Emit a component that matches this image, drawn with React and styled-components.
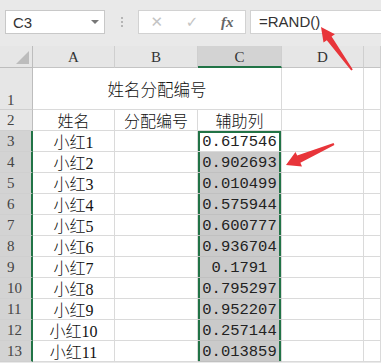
import React from 'react';
import styled, { createGlobalStyle, css } from 'styled-components';

const GREEN = '#217346';

const Global = createGlobalStyle`
  body {
    margin: 0;
    background: #e9e9e9;
    font-family: "Liberation Sans", "Noto Sans CJK SC", sans-serif;
  }
`;

const Page = styled.div`
  position: relative;
  width: 381px;
  height: 363px;
  overflow: hidden;
  background: #e9e9e9;
`;

const FormulaBar = styled.div`
  display: flex;
  align-items: center;
  height: 46px;
  padding: 0 0 2px 5px;
  box-sizing: border-box;
`;

const NameBox = styled.div`
  display: flex;
  align-items: center;
  justify-content: space-between;
  width: 100px;
  height: 24px;
  box-sizing: border-box;
  padding: 0 5px 0 7px;
  background: #fff;
  border: 1px solid #c8c8c8;
  font-size: 15px;
  color: #333;
`;

const Caret = styled.span`
  width: 0;
  height: 0;
  border-left: 4px solid transparent;
  border-right: 4px solid transparent;
  border-top: 4px solid #777;
`;

const Grip = styled.div`
  width: 2px;
  height: 13px;
  margin: 0 15px 0 16px;
  background-image: radial-gradient(circle, #b5b5b5 1px, transparent 1.2px);
  background-size: 2px 4px;
`;

const ButtonBox = styled.div`
  display: flex;
  align-items: center;
  justify-content: space-around;
  width: 108px;
  height: 24px;
  box-sizing: border-box;
  background: #fff;
  border: 1px solid #d2d2d2;
  margin-right: 4px;
`;

const ToolIcon = styled.span`
  font-size: 15px;
  color: ${p => (p.$dark ? '#666' : '#c4c4c4')};
  font-family: ${p => (p.$dark ? '"Liberation Serif", serif' : '"DejaVu Sans", sans-serif')};
  font-style: ${p => (p.$dark ? 'italic' : 'normal')};
  font-weight: ${p => (p.$dark ? 'bold' : 'normal')};
`;

const FormulaInput = styled.div`
  flex: 1;
  height: 24px;
  box-sizing: border-box;
  background: #fff;
  border: 1px solid #d2d2d2;
  border-right: none;
  padding-left: 8px;
  line-height: 22px;
  font-size: 15px;
  color: #333;
`;

const Sheet = styled.div`
  display: grid;
  grid-template-columns: 33px 82px 83px 84px 82px 1fr;
  grid-template-rows: 22px 42px repeat(12, 21px);
  background: #fff;
`;

const headBase = css`
  display: flex;
  align-items: center;
  justify-content: center;
  box-sizing: border-box;
  font-family: "Liberation Serif", serif;
  color: #333;
  background: #e6e6e6;
`;

const Corner = styled.div`
  ${headBase};
  position: relative;
  border-right: 1px solid #bdbdbd;
  border-bottom: 1px solid #bdbdbd;
  &::after {
    content: '';
    position: absolute;
    right: 3px;
    bottom: 3px;
    border-left: 13px solid transparent;
    border-bottom: 13px solid #bcbcbc;
  }
`;

const ColHead = styled.div`
  ${headBase};
  font-size: 15px;
  padding-top: 2px;
  border-right: 1px solid #cfcfcf;
  border-bottom: ${p => (p.$sel ? `2px solid ${GREEN}` : '1px solid #c4c4c4')};
  background: ${p => (p.$sel ? '#d3d3d3' : '#e6e6e6')};
`;

const RowHead = styled.div`
  ${headBase};
  font-size: 15px;
  color: #444;
  align-items: ${p => (p.$tall ? 'flex-end' : 'center')};
  justify-content: flex-start;
  padding-left: 7px;
  border-bottom: 1px solid #cfcfcf;
  border-right: ${p => (p.$sel ? `2px solid ${GREEN}` : '1px solid #bdbdbd')};
  background: ${p => (p.$sel ? '#d3d3d3' : '#e6e6e6')};
`;

const Cell = styled.div`
  display: flex;
  align-items: center;
  justify-content: center;
  box-sizing: border-box;
  border-right: 1px solid #dadada;
  border-bottom: 1px solid #dadada;
  font-family: "Liberation Serif", "Noto Sans CJK SC", serif;
  font-size: 16px;
  font-weight: 300;
  color: #111;
  white-space: nowrap;
  overflow: hidden;
`;

const TitleCell = styled(Cell)`
  grid-column: span 3;
  font-size: 16.5px;
`;

const NumCell = styled(Cell)`
  font-family: "Liberation Mono", monospace;
  font-size: 15.5px;
  font-weight: 400;
  color: #222;
  padding-top: 2px;
  background: ${p => (p.$active ? '#fff' : '#cacaca')};
  border-bottom-color: ${p => (p.$active ? '#dadada' : '#c0c0c0')};
  box-shadow: inset 2px 0 0 ${GREEN}, inset -2px 0 0 ${GREEN}
    ${p => (p.$first ? `, inset 0 2px 0 ${GREEN}` : '')};
`;

const Overlay = styled.svg`
  position: absolute;
  left: 0;
  top: 0;
  pointer-events: none;
`;

const names = Array.from({ length: 11 }, (_, i) => `小红${i + 1}`);
const values = [
  '0.617546', '0.902693', '0.010499', '0.575944', '0.600777', '0.936704',
  '0.1791', '0.795297', '0.952207', '0.257144', '0.013859',
];

export default function App() {
  return (
    <Page>
      <Global />
      <FormulaBar>
        <NameBox>
          C3
          <Caret />
        </NameBox>
        <Grip />
        <ButtonBox>
          <ToolIcon>✕</ToolIcon>
          <ToolIcon>✓</ToolIcon>
          <ToolIcon $dark>fx</ToolIcon>
        </ButtonBox>
        <FormulaInput>=RAND()</FormulaInput>
      </FormulaBar>

      <Sheet>
        <Corner />
        <ColHead>A</ColHead>
        <ColHead>B</ColHead>
        <ColHead $sel>C</ColHead>
        <ColHead>D</ColHead>
        <ColHead />

        <RowHead $tall>1</RowHead>
        <TitleCell>姓名分配编号</TitleCell>
        <Cell />
        <Cell />

        <RowHead>2</RowHead>
        <Cell>姓名</Cell>
        <Cell>分配编号</Cell>
        <Cell>辅助列</Cell>
        <Cell />
        <Cell />

        {names.map((n, i) => (
          <React.Fragment key={n}>
            <RowHead $sel>{i + 3}</RowHead>
            <Cell>{n}</Cell>
            <Cell />
            <NumCell $active={i === 0} $first={i === 0}>{values[i]}</NumCell>
            <Cell />
            <Cell />
          </React.Fragment>
        ))}
      </Sheet>

      <Overlay width="381" height="363">
        <polygon
          fill="#e8353a"
          points="321,27 334.9,34.3 331.6,36.6 352.8,69.4 351.2,70.6 326.8,40.2 323.5,42.5"
        />
        <polygon
          fill="#e8353a"
          points="286,165 302,166.5 300.4,162.8 334.4,144.9 333.6,143.1 297.2,155.6 295.5,152"
        />
      </Overlay>
    </Page>
  );
}
